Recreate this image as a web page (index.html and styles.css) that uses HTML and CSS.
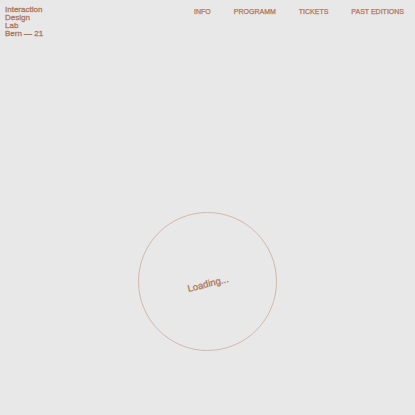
FILE: index.html
```html
<!DOCTYPE html>
<html lang="de">
<head>
<meta charset="utf-8">
<title>Interaction Design Lab Bern — 21</title>
<link rel="stylesheet" href="styles.css">
</head>
<body>
<header class="header">
  <div class="brand">Interaction<br>Design<br>Lab<br>Bern — 21</div>
  <nav class="nav">
    <a class="nav-item" href="#">INFO</a>
    <a class="nav-item" href="#">PROGRAMM</a>
    <a class="nav-item" href="#">TICKETS</a>
    <a class="nav-item" href="#">PAST EDITIONS</a>
  </nav>
</header>
<main class="stage">
  <div class="loader">
    <span class="loader-text">Loading...</span>
  </div>
</main>
</body>
</html>
```
FILE: styles.css
```css
html, body {
  margin: 0;
  padding: 0;
  background: #e8e8e8;
  height: 100%;
}
body {
  font-family: "Liberation Sans", Arial, sans-serif;
  color: #ad785d;
}
.header {
  display: flex;
  justify-content: space-between;
  align-items: flex-start;
  height: 39px;
  padding: 5.5px 11px 0 5px;
  box-sizing: border-box;
}
.brand {
  font-size: 8px;
  line-height: 8.3px;
  -webkit-text-stroke: 0.3px #ad785d;
}
.nav {
  display: flex;
  gap: 23px;
  margin-top: 2px;
}
.nav-item {
  font-size: 7px;
  line-height: 8px;
  color: #ad785d;
  text-decoration: none;
  -webkit-text-stroke: 0.25px #ad785d;
}
.stage {
  display: flex;
  justify-content: center;
  padding-top: 173px;
}
.loader {
  width: 137px;
  height: 137px;
  border: 1px solid #d2b9ab;
  border-radius: 50%;
  display: flex;
  align-items: center;
  justify-content: center;
}
.loader-text {
  font-size: 9.5px;
  -webkit-text-stroke: 0.3px #ad785d;
  transform: rotate(-14deg);
  margin-top: 3px;
}
```
